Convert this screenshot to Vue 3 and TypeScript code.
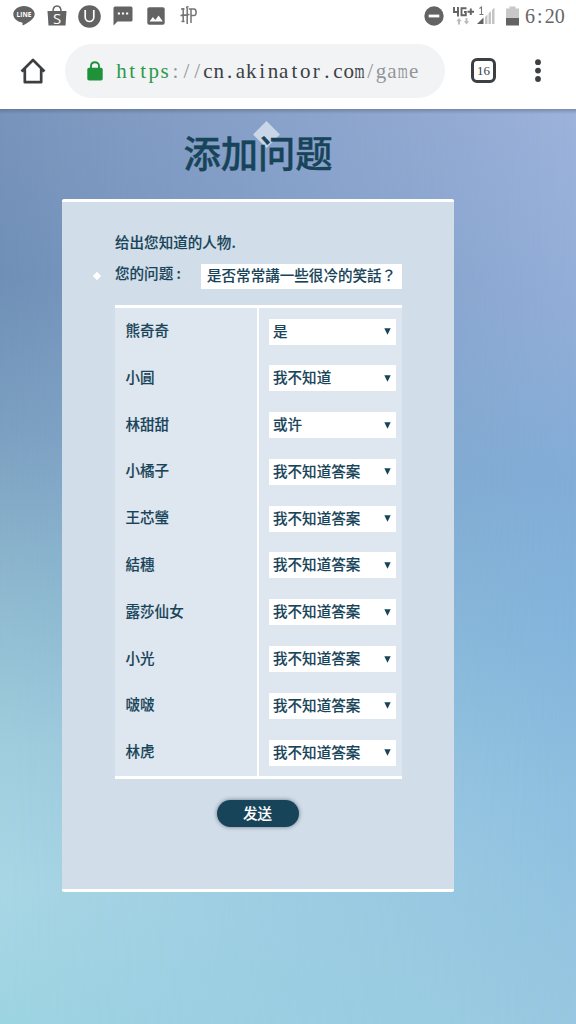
<script setup lang="ts">
import { ref } from "vue";

interface Entry {
  name: string;
  answer: string;
}

interface UrlPart {
  text: string;
  kind: string;
  start: number;
}

const CELL = 10.82;

const urlParts: UrlPart[] = [
  { text: "https", kind: "secure", start: 0 },
  { text: "://", kind: "muted", start: 5 },
  { text: "cn.akinator.com", kind: "host", start: 8 },
  { text: "/game", kind: "muted", start: 23 },
];

const question = ref("是否常常講一些很冷的笑話？");

const entries = ref<Entry[]>([
  { name: "熊奇奇", answer: "是" },
  { name: "小圓", answer: "我不知道" },
  { name: "林甜甜", answer: "或许" },
  { name: "小橘子", answer: "我不知道答案" },
  { name: "王芯瑩", answer: "我不知道答案" },
  { name: "結穗", answer: "我不知道答案" },
  { name: "露莎仙女", answer: "我不知道答案" },
  { name: "小光", answer: "我不知道答案" },
  { name: "啵啵", answer: "我不知道答案" },
  { name: "林虎", answer: "我不知道答案" },
]);

// Centre of a character cell, so the serif letters sit on an even grid
function cellX(index: number, cell = CELL): string {
  return ((index + 0.5) * cell).toFixed(2);
}

function cells(text: string, cell: number): string {
  return [...text].map((_, i) => cellX(i, cell)).join(" ");
}

// The wide letter has to be narrowed to stay inside its cell
function fit(ch: string): number | undefined {
  return ch === "m" ? 10 : undefined;
}
</script>

<template>
  <div class="screen">
    <header class="status-bar">
      <div class="status-left">
        <svg width="22" height="22" viewBox="0 0 22 22">
          <path d="M11 1C5 1 .3 4.700 .3 9.300c0 4 3.600 7.500 8.600 8.200.9.200.7.800.6 1.900-.1.900.3 1.200 1.200.7 3.500-2 11-6 11-10.800C21.700 4.700 17 1 11 1z" fill="#636363" />
          <text x="11" y="11.700" text-anchor="middle" font-size="6.500" font-weight="700" fill="#fff" textLength="15">LINE</text>
        </svg>
        <svg class="shop" width="20" height="22" viewBox="0 0 20 22">
          <path d="M.5 6h19l-1 14.500h-17z" fill="#636363" />
          <path d="M6 6.500C6 3 7.600 1 10 1s4 2 4 5.500" fill="none" stroke="#636363" stroke-width="1.500" />
          <text x="10" y="18.500" text-anchor="middle" font-size="15" fill="#fff">S</text>
        </svg>
        <svg class="u-icon" width="23" height="23" viewBox="0 0 23 23">
          <circle cx="11.500" cy="11.500" r="11.300" fill="#636363" />
          <path d="M7.200 5v7.300c0 5.600 8.600 5.600 8.600 0V5" fill="none" stroke="#fff" stroke-width="1.700" />
        </svg>
        <svg class="chat" width="20" height="20" viewBox="0 0 20 20">
          <path d="M2 .5h16q1.500 0 1.500 1.500v12q0 1.500-1.500 1.500H4.500L.5 19.500V2Q.5.500 2 .5z" fill="#636363" />
          <path d="M4.800 7.500h2.200M8.900 7.500h2.200M13 7.500h2.200" stroke="#fff" stroke-width="1.800" />
        </svg>
        <svg class="photo" width="18" height="18" viewBox="0 0 18 18">
          <rect x=".3" y=".3" width="17.400" height="17.400" rx="2" fill="#636363" />
          <path d="M2.500 14.500l3.400-4.500 2.400 3 3.300-4.400 4.200 5.900z" fill="#fff" />
        </svg>
        <svg class="hp" width="18" height="20" viewBox="0 0 18 20">
          <path d="M3.200 2v14M7.200 1v17M.5 9.500L9.500 8.500M11 3v14M8.800 3h5.200c2.800 0 2.800 6.500 0 6.500h-3M1 3h3.500M1.500 15.500h3M6 1.500l2.500-1" fill="none" stroke="#747474" stroke-width="1.500" />
        </svg>
      </div>
      <div class="status-right">
        <svg width="20" height="20" viewBox="0 0 20 20">
          <circle cx="10" cy="10" r="9.700" fill="#636363" />
          <rect x="4.700" y="8.600" width="10.600" height="2.800" fill="#fff" />
        </svg>
        <svg class="network" width="44" height="22" viewBox="0 0 44 22">
          <path d="M2 2v5h5M6 2v9.500M14.500 3.200H9.500v7.100h4.300V7h-1.800M15.500 6.800h6.500M18.800 3.500v6.600" fill="none" stroke="#636363" stroke-width="1.900" />
          <path d="M7 13l-2.700 3.200h1.700v3.300h2v-3.300h1.700zM14.500 19.500l-2.700-3.200h1.700V13h2v3.300h1.700z" fill="#bbb" />
          <path d="M27.500 3.500L29.500 2v7.500M27.500 9.500h4" fill="none" stroke="#777" stroke-width="1.100" />
          <path d="M25 19l6.500-6.500V19z" fill="#636363" />
          <path d="M33 12l2.500-2.500V19H33zM36.500 8.500L39 6v13h-2.500zM40 5l2.500-2.500V19H40z" fill="#c4c4c4" />
        </svg>
        <svg class="battery" width="13" height="20" viewBox="0 0 13 20">
          <path d="M0 2.500h3.500V.5h6v2H13V12H0z" fill="#c8c8c8" />
          <path d="M0 12h13v7.500H0z" fill="#636363" />
        </svg>
        <svg class="clock" width="40" height="24" viewBox="0 0 40 24">
          <text :x="cells('6:20', 9.9)" y="18.500" text-anchor="middle" font-size="20">6:20</text>
        </svg>
      </div>
    </header>

    <nav class="toolbar">
      <svg class="home" width="26" height="26" viewBox="0 0 26 26">
        <path d="M1.500 13.500L13 2l11.500 11.500M4.800 11v13.200h16.400V11" fill="none" stroke="#3c4043" stroke-width="2.700" stroke-linejoin="round" />
      </svg>
      <div class="address">
        <svg class="lock" width="16" height="20" viewBox="0 0 16 20">
          <rect x=".3" y="6.700" width="15.400" height="12.800" rx="1.700" fill="#1e9139" />
          <path d="M4 7.500V5c0-5 8-5 8 0v2.500" fill="none" stroke="#1e9139" stroke-width="1.900" />
        </svg>
        <svg class="url" width="304" height="30" viewBox="0 0 304 30">
          <text v-for="part in urlParts" :key="part.start" :class="part.kind"
                y="22" text-anchor="middle" font-size="21"><tspan
            v-for="(ch, i) in part.text" :key="i" :x="cellX(part.start + i)"
            :textLength="fit(ch)" lengthAdjust="spacingAndGlyphs">{{ ch }}</tspan></text>
        </svg>
      </div>
      <div class="tabs">16</div>
      <svg class="more" width="6" height="24" viewBox="0 0 6 24">
        <circle cx="3" cy="3.200" r="2.900" />
        <circle cx="3" cy="11.600" r="2.900" />
        <circle cx="3" cy="20" r="2.900" />
      </svg>
    </nav>

    <main class="page">
      <h1><span class="gem"></span><span class="title">添加问题</span></h1>
      <section class="panel">
        <p class="intro">给出您知道的人物.</p>
        <div class="question">
          <span class="bullet"></span>
          <label>您的问题 :</label>
          <div class="field">{{ question }}</div>
        </div>
        <div class="answers">
          <div v-for="entry in entries" :key="entry.name" class="row">
            <div class="name">{{ entry.name }}</div>
            <div class="choice">
              <div class="select">
                <span>{{ entry.answer }}</span>
                <svg width="7" height="7" viewBox="0 0 7 7"><path d="M.3.300h6.400L3.500 6.700z" /></svg>
              </div>
            </div>
          </div>
        </div>
        <button class="send">发送</button>
      </section>
    </main>
  </div>
</template>

<style>
body {
  margin: 0;
}
</style>

<style scoped>
.screen {
  display: flex;
  flex-direction: column;
  width: 576px;
  height: 1024px;
  overflow: hidden;
  background: #fff;
  font-family: "Noto Sans CJK SC", "Noto Sans", sans-serif;
  color: #184459;
}

svg {
  display: block;
  flex-shrink: 0;
}

/* --- Status bar --- */
.status-bar {
  display: flex;
  justify-content: space-between;
  height: 32px;
  padding: 0 11px 0 13px;
  font-family: "Open Sans", sans-serif;
}

.status-left,
.status-right {
  display: flex;
  align-items: center;
}

.shop { margin-left: 12px; }
.u-icon { margin-left: 11px; }
.chat { margin-left: 12px; }
.photo { margin-left: 14px; }
.hp { margin-left: 15px; }

.network { margin-left: 8px; }
.battery { margin-left: 10px; }

.clock {
  margin-left: 6px;
  font-family: "Liberation Serif", serif;
  fill: #666;
}

/* --- Browser toolbar --- */
.toolbar {
  display: flex;
  align-items: center;
  height: 77px;
  font-family: "Liberation Serif", serif;
}

.home {
  margin-left: 20px;
}

.address {
  display: flex;
  align-items: center;
  box-sizing: border-box;
  width: 380px;
  height: 54px;
  margin-left: 19px;
  padding-left: 22px;
  border-radius: 27px;
  background: #f1f3f5;
}

.url {
  margin-left: 13px;
}

.secure { fill: #2c9a48; }
.muted { fill: #92969a; }
.host { fill: #3c4043; }

.tabs {
  box-sizing: border-box;
  width: 25px;
  height: 25px;
  margin-left: 26px;
  border: 3px solid #3c4043;
  border-radius: 6px;
  font-size: 13px;
  line-height: 20px;
  text-align: center;
  color: #3c4043;
}

.more {
  margin-left: 39px;
  fill: #3c4043;
}

/* --- Game page --- */
.page {
  position: relative;
  z-index: 0;
  flex: 1;
  background: linear-gradient(#9db3dc 0, #92aed8 200px, #82add7 370px, #84b5dc 520px, #8fc0e0 690px, #98c8e1 915px);
}

.page::before {
  content: "";
  position: absolute;
  inset: 0;
  z-index: -1;
  background: linear-gradient(#7893bb 0, #6f8fb6 170px, #7b9fc0 320px, #90bbd0 500px, #a0cddd 640px, #a8d6e4 780px, #9dd4e2 915px);
  mask-image: linear-gradient(to right, #000 0, rgba(0, 0, 0, 0.85) 70px, rgba(0, 0, 0, 0.25) 450px, transparent 576px);
}

.page::after {
  content: "";
  position: absolute;
  inset: 0 0 auto;
  height: 5px;
  background: linear-gradient(rgba(70, 85, 105, 0.4), transparent);
}

h1 {
  position: relative;
  width: 392px;
  height: 90px;
  margin: 0 0 0 62px;
  font-size: 37.3px;
  font-weight: 500;
  line-height: 86px;
  text-align: center;
  -webkit-text-stroke: 0.4px #184459;
}

.title {
  position: relative;
}

.gem {
  position: absolute;
  left: 195px;
  top: 16px;
  width: 19px;
  height: 19px;
  background: #c9d6e7;
  transform: rotate(45deg);
}

.panel {
  display: flex;
  flex-direction: column;
  box-sizing: border-box;
  width: 392px;
  height: 693px;
  margin-left: 62px;
  padding: 28px 52px 0 53px;
  border-top: 3px solid #fff;
  border-bottom: 3px solid #fff;
  border-radius: 2px;
  background: #d1dde8;
  font-size: 14.55px;
  font-weight: 500;
  -webkit-text-stroke: 0.12px currentColor;
}

.intro {
  margin: 0;
  height: 24px;
  line-height: 24px;
}

.question {
  position: relative;
  display: flex;
  justify-content: space-between;
  margin-top: 10px;
  height: 26px;
  line-height: 18px;
}

.bullet {
  position: absolute;
  left: -21px;
  top: 9px;
  width: 6px;
  height: 6px;
  background: #fff;
  transform: rotate(45deg);
}

.field {
  box-sizing: border-box;
  width: 201px;
  height: 25px;
  padding-left: 6px;
  font-family: "Noto Sans CJK TC", "Noto Sans", sans-serif;
  line-height: 22px;
  white-space: nowrap;
  overflow: hidden;
  background: #fff;
}

.answers {
  margin-top: 15px;
  border-top: 3px solid #fff;
  border-bottom: 3px solid #fff;
}

.row {
  display: flex;
  height: 46.8px;
  background: #dee6ef;
}

.name {
  box-sizing: border-box;
  width: 144px;
  padding: 10px 0 0 10.5px;
  border-right: 2px solid #fff;
  line-height: 24px;
}

.choice {
  padding: 10.5px 0 0 10px;
}

.select {
  display: flex;
  align-items: center;
  justify-content: space-between;
  box-sizing: border-box;
  width: 127px;
  height: 26px;
  padding: 0 5px 2px 4px;
  line-height: 24px;
  background: #fff;
}

.select svg {
  fill: #184459;
  margin-top: 2px;
}

.send {
  align-self: center;
  width: 82px;
  height: 27px;
  margin: 21px 2px 0 0;
  padding: 0 0 2px;
  border: 0;
  border-radius: 14px;
  background: #184459;
  box-shadow: 0 0 4px rgba(40, 50, 80, 0.6);
  font: inherit;
  line-height: 25px;
  color: #fff;
}
</style>
